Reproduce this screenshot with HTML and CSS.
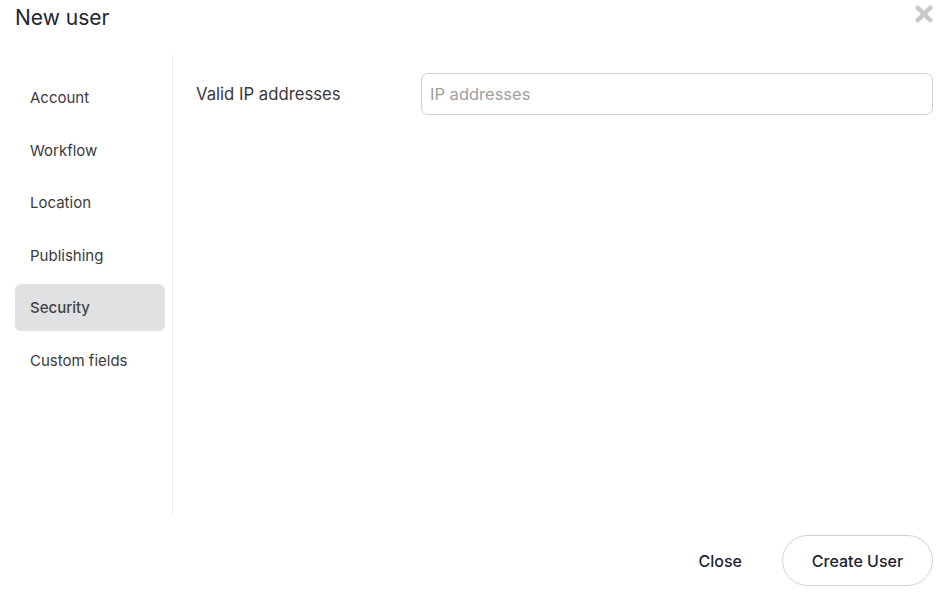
FILE: index.html
```html
<!DOCTYPE html>
<html>
<head>
<meta charset="utf-8">
<link rel="stylesheet" href="styles.css">
</head>
<body>
<div class="modal">
  <header class="head">
    <h1 class="title">New user</h1>
    <button class="x" aria-label="Close">
      <svg width="18" height="18" viewBox="0 0 18 18"><path d="M3 3 L15 15 M15 3 L3 15" stroke="#c9c9c9" stroke-width="4.5" stroke-linecap="square"/></svg>
    </button>
  </header>
  <div class="body">
    <nav class="side">
      <div class="item">Account</div>
      <div class="item">Workflow</div>
      <div class="item">Location</div>
      <div class="item">Publishing</div>
      <div class="item active">Security</div>
      <div class="item">Custom fields</div>
    </nav>
    <main class="content">
      <div class="row">
        <label class="label">Valid IP addresses</label>
        <input class="input" placeholder="IP addresses">
      </div>
    </main>
  </div>
  <footer class="foot">
    <button class="btn-link">Close</button>
    <button class="btn">Create User</button>
  </footer>
</div>
</body>
</html>
```
FILE: styles.css
```css
html, body { margin: 0; padding: 0; background: #fff; }
body { font-family: Inter, "Noto Sans", sans-serif; color: #3a3a3a; width: 940px; height: 594px; overflow: hidden; }
.modal { display: flex; flex-direction: column; height: 594px; }
.head { display: flex; justify-content: space-between; align-items: flex-start; padding: 5px 7px 0 15px; height: 50px; box-sizing: border-box; }
.title { margin: 0; font-size: 21px; font-weight: 400; color: #222530; line-height: 26px; }
.x { border: 0; background: none; padding: 0; margin-top: 0; cursor: pointer; }
.body { display: flex; height: 460px; margin-top: 5px; }
.side { width: 157px; padding: 0 0 0 15px; border-right: 1px solid #efefef; display: flex; flex-direction: column; gap: 5.5px; padding-top: 19px; }
.item { width: 150px; height: 47px; box-sizing: border-box; padding-left: 15px; display: flex; align-items: center; font-size: 15px; color: #3a3a3a; border-radius: 6px; }
.item.active { background: #e0e1e3; font-weight: 500; color: #444; }
.content { flex: 1; padding: 18px 7px 0 23px; }
.row { display: flex; align-items: center; }
.label { width: 225px; font-size: 16.7px; color: #3a3a3a; }
.input { flex: 1; height: 42px; box-sizing: border-box; border: 1px solid #cfcfcf; border-radius: 7px; padding: 0 8px; font-family: inherit; font-size: 16.5px; color: #333; }
.input::placeholder { color: #a0a0a0; }
.foot { display: flex; justify-content: flex-end; align-items: center; gap: 40px; padding: 20px 7px 0 0; }
.btn-link { border: 0; background: none; font-family: inherit; font-size: 16px; font-weight: 500; color: #1f2330; padding: 0; }
.btn { height: 51px; width: 151px; border: 1px solid #d2d2d2; border-radius: 26px; background: #fff; font-family: inherit; font-size: 16px; font-weight: 500; color: #1f2330; }
```
